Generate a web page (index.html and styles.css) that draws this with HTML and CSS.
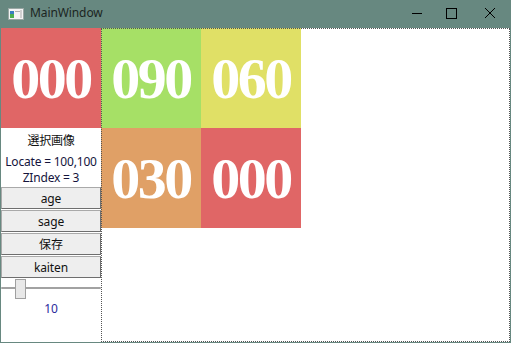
FILE: index.html
```html
<html>
  <head>
    <link rel="stylesheet" href="styles.css">
  </head>
  <body>
    <div class="window">
      <!-- title bar -->
      <div class="titlebar">
        <svg class="app-icon" width="16" height="16" viewBox="0 0 16 16">
          <rect x="0.5" y="2.5" width="15" height="11" fill="#f4f4f4" stroke="#9aa7a4"/>
          <rect x="2" y="5" width="4" height="7" fill="#3a7fc0"/>
          <rect x="2" y="8" width="4" height="4" fill="#4caf50"/>
          <rect x="7" y="5" width="7" height="1" fill="#b0b0b0"/>
          <rect x="12" y="4" width="2" height="8" fill="#d0d0d0"/>
        </svg>
        <span class="title">MainWindow</span>
        <div class="controls">
          <div class="ctrl">
            <svg width="12" height="12" viewBox="0 0 12 12"><path d="M1 6.5h10" stroke="#000" stroke-width="1"/></svg>
          </div>
          <div class="ctrl">
            <svg width="12" height="12" viewBox="0 0 12 12"><rect x="1.5" y="1.5" width="10" height="10" fill="none" stroke="#000"/></svg>
          </div>
          <div class="ctrl close">
            <svg width="12" height="12" viewBox="0 0 12 12"><path d="M1 1l10 10M11 1L1 11" stroke="#000" stroke-width="1"/></svg>
          </div>
        </div>
      </div>

      <div class="client">
        <!-- left side panel -->
        <div class="side">
          <div class="tile red">000</div>
          <div class="caption">選択画像</div>
          <div class="info">Locate = 100,100</div>
          <div class="info">ZIndex = 3</div>
          <button class="btn">age</button>
          <button class="btn">sage</button>
          <button class="btn">保存</button>
          <button class="btn">kaiten</button>
          <div class="slider">
            <div class="track"></div>
            <div class="thumb"></div>
          </div>
          <div class="value">10</div>
        </div>

        <!-- image canvas -->
        <div class="canvas">
          <div class="tiles">
            <div class="tile green">090</div>
            <div class="tile yellow">060</div>
            <div class="tile orange">030</div>
            <div class="tile red">000</div>
          </div>
        </div>
      </div>
    </div>
  </body>
</html>
```

FILE: styles.css
```css
html, body {
  margin: 0;
  padding: 0;
  background-color: #678880;
}
.window {
  width: 511px;
  height: 343px;
  display: flex;
  flex-direction: column;
  font-family: 'Noto Sans', 'Noto Sans CJK JP', sans-serif;
  background-color: #678880;
}
.titlebar {
  height: 28px;
  display: flex;
  align-items: center;
}
.app-icon {
  margin-left: 8px;
  margin-top: -1px;
}
.title {
  margin-left: 6px;
  font-size: 12px;
  letter-spacing: -0.1px;
  color: #1b2522;
  margin-top: -4px;
}
.controls {
  margin-left: auto;
  display: flex;
  height: 28px;
}
.ctrl {
  width: 34px;
  display: flex;
  align-items: center;
  justify-content: center;
  margin-top: -2px;
}
.ctrl.close {
  width: 43px;
}

.client {
  flex: 1;
  display: flex;
  margin: 0 1px 1px 1px;
  background-color: white;
}

/* side panel */
.side {
  width: 100px;
  display: flex;
  flex-direction: column;
  align-items: center;
  font-size: 12px;
  letter-spacing: -0.2px;
  color: #14143c;
}
.caption {
  line-height: 16px;
  padding: 5px 0;
  color: #111;
}
.info {
  line-height: 16px;
  white-space: nowrap;
}
.btn {
  width: 100px;
  height: 22px;
  margin-top: 1px;
  padding: 0;
  font-family: 'Noto Sans', 'Noto Sans CJK JP', sans-serif;
  font-size: 12px;
  letter-spacing: -0.1px;
  color: #111;
  background-color: #eeeeee;
  border: 1px solid #a9a9a9;
  border-right-color: #6e6e6e;
  border-bottom-color: #6e6e6e;
}
.slider {
  width: 100px;
  height: 18px;
  margin-top: 1px;
  display: flex;
  align-items: center;
  position: relative;
}
.track {
  width: 100%;
  height: 2px;
  background-color: #a2a2a2;
  border-radius: 1px;
}
.thumb {
  position: absolute;
  left: 14px;
  top: 0;
  width: 9px;
  height: 18px;
  background-color: #e8e8e8;
  border: 1px solid #a0a0a0;
}
.value {
  margin-top: 2px;
  line-height: 20px;
  color: #2b2b9c;
}

/* canvas */
.canvas {
  flex: 1;
  outline: 1px dotted #555;
  outline-offset: -1px;
}
.tiles {
  display: grid;
  grid-template-columns: 100px 100px;
  grid-template-rows: 100px 100px;
}
.tile {
  width: 100px;
  height: 100px;
  display: flex;
  align-items: center;
  justify-content: center;
  font-family: 'Liberation Serif', 'DejaVu Serif', serif;
  font-weight: bold;
  font-size: 58px;
  letter-spacing: -2.5px;
  color: white;
}
.red { background-color: #e06666; }
.green { background-color: #a6e066; }
.yellow { background-color: #e0e066; }
.orange { background-color: #e0a066; }
```
